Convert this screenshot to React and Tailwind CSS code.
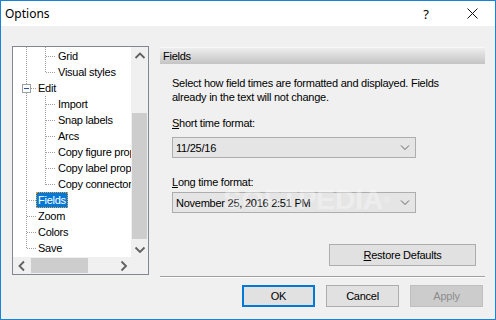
import React from "react";

const rows = [
  { t: "Grid", l: 2 },
  { t: "Visual styles", l: 2 },
  { t: "Edit", l: 1 },
  { t: "Import", l: 2 },
  { t: "Snap labels", l: 2 },
  { t: "Arcs", l: 2 },
  { t: "Copy figure properties", l: 2 },
  { t: "Copy label properties", l: 2 },
  { t: "Copy connector properties", l: 2 },
  { t: "Fields", l: 1, sel: true },
  { t: "Zoom", l: 1 },
  { t: "Colors", l: 1 },
  { t: "Save", l: 1 },
];

function Chevron({ dir }) {
  const pts = {
    up: "3.5,10 8,5.5 12.5,10",
    down: "3.5,6.5 8,11 12.5,6.5",
    left: "10,3.5 5.5,8 10,12.5",
    right: "6.5,3.5 11,8 6.5,12.5",
  }[dir];
  return (
    <svg width="16" height="16" viewBox="0 0 16 16">
      <polyline points={pts} fill="none" stroke="#606060" strokeWidth="1.8" />
    </svg>
  );
}

function TreeLines() {
  const c = (i) => 9 + 16 * i + 0.5;
  const l2 = [0, 1, 3, 4, 5, 6, 7, 8];
  const l1 = [9, 10, 11, 12];
  const dash = { stroke: "#a0a0a0", strokeDasharray: "1 1", shapeRendering: "crispEdges" };
  return (
    <svg className="absolute left-0 top-0 pointer-events-none" width="118" height="210">
      <line x1="13.5" y1="0" x2="13.5" y2="37" {...dash} />
      <line x1="13.5" y1="46" x2="13.5" y2="202" {...dash} />
      <line x1="32.5" y1="0" x2="32.5" y2="26" {...dash} />
      <line x1="32.5" y1="49" x2="32.5" y2="138" {...dash} />
      {l2.map((i) => (
        <line key={"a" + i} x1="33" y1={c(i)} x2="43" y2={c(i)} {...dash} />
      ))}
      {l1.map((i) => (
        <line key={"b" + i} x1="14" y1={c(i)} x2="23" y2={c(i)} {...dash} />
      ))}
      <line x1="18" y1={c(2)} x2="23" y2={c(2)} {...dash} />
      <rect x="9.5" y="37.5" width="8" height="8" fill="#fcfcfc" stroke="#9a9ea6" shapeRendering="crispEdges" />
      <line x1="11" y1="41.5" x2="16" y2="41.5" stroke="#2d4fa0" shapeRendering="crispEdges" />
    </svg>
  );
}

function Tree() {
  return (
    <div className="w-[137px] h-[229px] border border-[#828790] bg-white flex flex-col shrink-0">
      <div className="flex flex-1 min-h-0">
        <div className="relative flex-1 overflow-hidden pt-[1px]">
          <TreeLines />
          {rows.map((r, i) => (
            <div
              key={i}
              className={
                "relative h-[16px] flex items-center whitespace-nowrap " +
                (r.l === 2 ? "pl-[43px]" : "pl-[23px]")
              }
            >
              <span
                className={
                  "h-[16px] flex items-center px-[1px] border " +
                  (r.sel
                    ? "bg-[#0078d7] text-white border-dotted border-[#f0a030]"
                    : "border-transparent text-black")
                }
              >
                {r.t}
              </span>
            </div>
          ))}
        </div>
        <div className="w-[17px] bg-[#f0f0f0] flex flex-col">
          <div className="h-[17px] flex items-center justify-center">
            <Chevron dir="up" />
          </div>
          <div className="flex-1">
            <div className="mt-[49px] mx-[1px] h-[126px] bg-[#cdcdcd]" />
          </div>
          <div className="h-[17px] flex items-center justify-center">
            <Chevron dir="down" />
          </div>
        </div>
      </div>
      <div className="h-[17px] flex bg-[#f0f0f0]">
        <div className="w-[17px] flex items-center justify-center">
          <Chevron dir="left" />
        </div>
        <div className="flex-1 flex items-center">
          <div className="ml-[1px] w-[57px] h-[15px] bg-[#cdcdcd]" />
        </div>
        <div className="w-[17px] flex items-center justify-center">
          <Chevron dir="right" />
        </div>
        <div className="w-[17px]" />
      </div>
    </div>
  );
}

function Combo({ value }) {
  return (
    <div className="ml-[12px] w-[244px] h-[21px] border border-[#adadad] bg-[#e5e5e5] flex items-center justify-between pl-[3px] pr-[5px]">
      <span>{value}</span>
      <svg width="10" height="6" viewBox="0 0 10 6">
        <polyline points="1,0.5 5,4.5 9,0.5" fill="none" stroke="#606060" strokeWidth="1" />
      </svg>
    </div>
  );
}

function Btn({ children, variant }) {
  const cls =
    variant === "default"
      ? "border-2 border-[#0078d7] bg-[#e1e1e1] text-black"
      : variant === "disabled"
      ? "border border-[#bfbfbf] bg-[#cccccc] text-[#8d8d8d]"
      : "border border-[#adadad] bg-[#e1e1e1] text-black";
  return (
    <div className={"w-[73px] h-[22px] flex items-center justify-center " + cls}>{children}</div>
  );
}

export default function App() {
  return (
    <div className="relative w-[496px] h-[320px] border border-[#1883d7] bg-[#f0f0f0] flex flex-col overflow-hidden font-['Liberation_Sans',Arial,sans-serif] text-[11px] tracking-[-0.25px] text-black leading-[14px]">
      <div className="h-[25px] bg-white flex items-center shrink-0">
        <div className="pl-[4px] flex-1 font-['Noto_Sans',sans-serif] text-[12px] tracking-normal">Options</div>
        <div className="w-[46px] h-full flex items-center justify-center font-['Noto_Sans',sans-serif] text-[13px] tracking-normal">?</div>
        <div className="w-[46px] h-full flex items-center justify-center">
          <svg width="11" height="11" viewBox="0 0 11 11">
            <line x1="0.5" y1="0.5" x2="10.5" y2="10.5" stroke="#111" strokeWidth="1" />
            <line x1="10.5" y1="0.5" x2="0.5" y2="10.5" stroke="#111" strokeWidth="1" />
          </svg>
        </div>
      </div>

      <div className="flex pt-[20px] pl-[11px]">
        <Tree />
        <div className="ml-[11px] w-[325px] flex flex-col">
          <div className="mt-[1px] h-[17px] flex items-center pl-[3px] bg-gradient-to-b from-[#eeeeee] to-[#c4c4c4] border-t border-[#f8f8f8]">
            Fields
          </div>
          <div className="mt-[12px] pl-[12px]">
            <div>Select how field times are formatted and displayed. Fields</div>
            <div>already in the text will not change.</div>
          </div>
          <div className="mt-[12px] pl-[12px]">
            <span className="underline">S</span>hort time format:
          </div>
          <div className="mt-[7px]">
            <Combo value="11/25/16" />
          </div>
          <div className="mt-[17px] pl-[12px]">
            <span className="underline">L</span>ong time format:
          </div>
          <div className="mt-[3px]">
            <Combo value="November 25, 2016 2:51 PM" />
          </div>
          <div className="mt-[31px] ml-[169px] w-[147px] h-[22px] border border-[#adadad] bg-[#e1e1e1] flex items-center justify-center">
            <span>
              <span className="underline">R</span>estore Defaults
            </span>
          </div>
          <div className="mt-[10px] h-px bg-[#a0a0a0]" />
          <div className="h-px bg-white" />
        </div>
      </div>

      <div className="mt-[7px] flex justify-end gap-[11px] pr-[12px]">
        <Btn variant="default">OK</Btn>
        <Btn>Cancel</Btn>
        <Btn variant="disabled">Apply</Btn>
      </div>

      <div className="absolute left-[222px] top-[188px] font-['Liberation_Sans',Arial,sans-serif] font-bold text-[28px] leading-[22px] tracking-normal text-white/35 pointer-events-none">
        SOFTPEDIA<span className="text-[9px] align-top">®</span>
      </div>
    </div>
  );
}
